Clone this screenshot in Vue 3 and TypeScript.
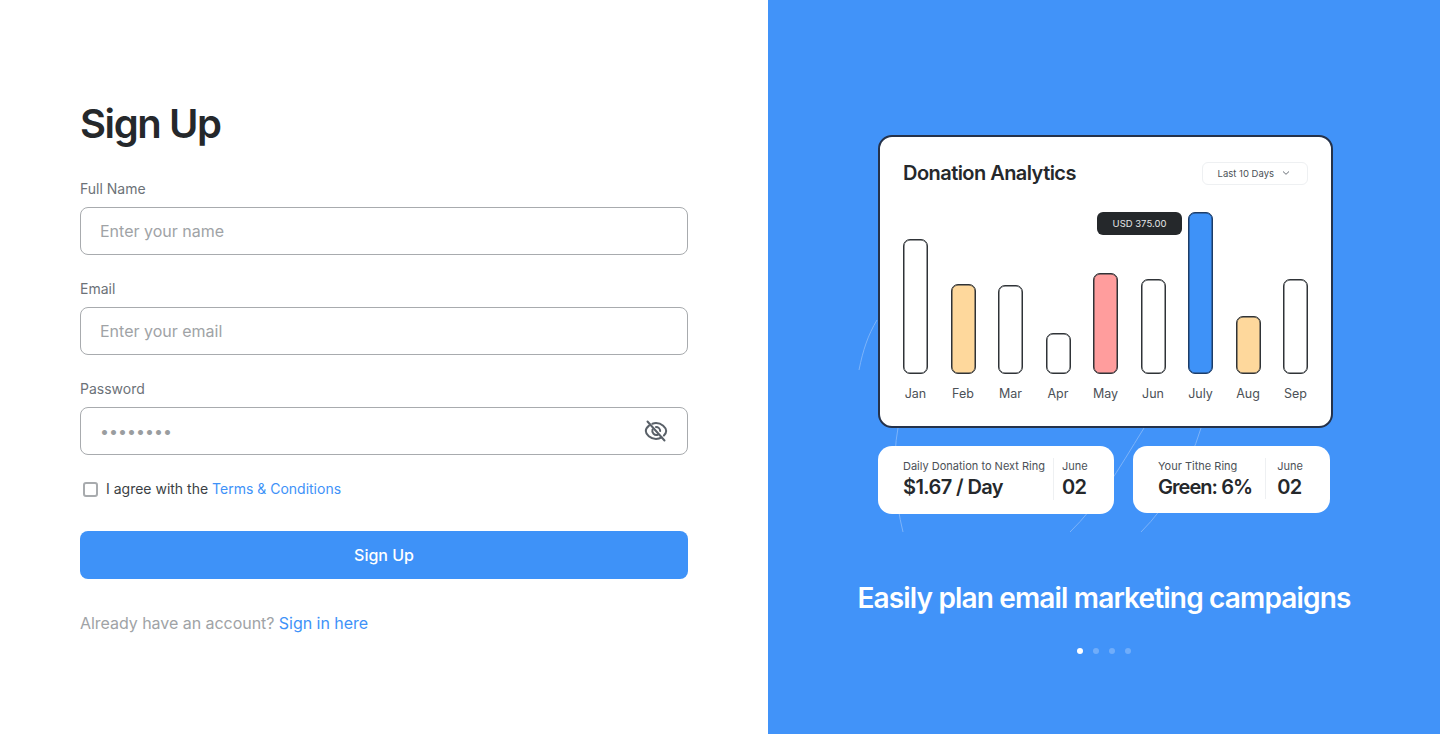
<script setup lang="ts">
interface Bar {
  month: string
  height: number
  tone?: string
}

const bars: Bar[] = [
  { month: 'Jan', height: 135 },
  { month: 'Feb', height: 90, tone: 'peach' },
  { month: 'Mar', height: 89 },
  { month: 'Apr', height: 41 },
  { month: 'May', height: 101, tone: 'pink' },
  { month: 'Jun', height: 95 },
  { month: 'July', height: 162, tone: 'blue' },
  { month: 'Aug', height: 58, tone: 'peach' },
  { month: 'Sep', height: 95 }
]

const stats = [
  { label: 'Daily Donation to Next Ring', value: '$1.67 / Day', kind: 'first' },
  { label: 'Your Tithe Ring', value: 'Green: 6%', kind: 'second' }
]
</script>

<template>
  <div class="page">
    <section class="form-side">
      <h1 class="title">Sign Up</h1>
      <form class="form" @submit.prevent>
        <div class="field">
          <label class="label">Full Name</label>
          <div class="input-box"><input class="input" type="text" placeholder="Enter your name" /></div>
        </div>
        <div class="field">
          <label class="label">Email</label>
          <div class="input-box"><input class="input" type="text" placeholder="Enter your email" /></div>
        </div>
        <div class="field">
          <label class="label">Password</label>
          <div class="input-box">
            <input class="input password" type="password" value="password" />
            <svg class="eye" viewBox="0 0 24 24" fill="none" stroke="#596068" stroke-width="2" stroke-linecap="round" stroke-linejoin="round">
              <path d="M5 6.6C3 8.2 1.8 10.2 1.8 12c0 3.4 4.6 8 10.2 8 2.100 0 4-.6 5.600-1.600" />
              <path d="M8.400 4.700C9.500 4.300 10.700 4 12 4c5.600 0 10.200 4.600 10.200 8 0 1.500-.9 3.100-2.300 4.500" />
              <path d="M8.500 10.500A4.200 4.200 0 0 0 13.800 15.800" />
              <path d="M12 7.900a4.200 4.200 0 0 1 4.200 4.100" />
              <path d="M3.500 2.500 20.500 21.500" />
            </svg>
          </div>
        </div>
        <label class="agree">
          <span class="check"></span>
          <span>I agree with the <a class="link">Terms &amp; Conditions</a></span>
        </label>
        <button class="submit" type="submit">Sign Up</button>
      </form>
      <p class="signin">Already have an account? <a class="link">Sign in here</a></p>
    </section>

    <section class="promo-side">
      <svg class="arcs" viewBox="0 0 672 734" fill="none" stroke="#9cc5fb" stroke-width="1">
        <path d="M109 320C100 335 95 350 91 370" />
        <path d="M130 428C124 460 127 500 135 532" />
        <path d="M376 428C350 470 330 505 302 532" />
        <path d="M433 428C420 470 400 505 373 532" />
      </svg>

      <div class="mock">
        <div class="card">
          <div class="card-head">
            <h2 class="card-title">Donation Analytics</h2>
            <div class="range">
              Last 10 Days
              <svg class="chev" viewBox="0 0 8 6" fill="none" stroke="#596068" stroke-width="0.9"><path d="M1 1.500 4 4.300 7 1.500" /></svg>
            </div>
          </div>
          <div class="chart">
            <div class="tooltip">USD 375.00</div>
            <div v-for="bar in bars" :key="bar.month" class="col">
              <div class="track">
                <div class="bar" :class="bar.tone" :style="{ height: bar.height + 'px' }"></div>
              </div>
              <span class="month">{{ bar.month }}</span>
            </div>
          </div>
        </div>

        <div class="stats">
          <div v-for="stat in stats" :key="stat.label" class="stat" :class="stat.kind">
            <div class="stat-main">
              <div class="stat-label">{{ stat.label }}</div>
              <div class="stat-value">{{ stat.value }}</div>
            </div>
            <div class="stat-date">
              <div class="stat-label">June</div>
              <div class="stat-value">02</div>
            </div>
          </div>
        </div>
      </div>

      <h2 class="tagline">Easily plan email marketing campaigns</h2>
      <div class="dots">
        <span class="dot on"></span>
        <span class="dot"></span>
        <span class="dot"></span>
        <span class="dot"></span>
      </div>
    </section>
  </div>
</template>

<style>
html,
body {
  margin: 0;
  background: #fff;
}
</style>

<style scoped>
.page {
  display: flex;
  height: 734px;
  overflow: hidden;
  font-family: Inter, "Noto Sans", sans-serif;
  color: #25282b;
}

.form-side {
  width: 768px;
  box-sizing: border-box;
  padding: 99px 80px 0;
}

.title {
  margin: 0 0 31px;
  font-size: 40px;
  line-height: 50px;
  font-weight: 600;
  letter-spacing: -1.4px;
  color: #25282b;
}

.form {
  display: flex;
  flex-direction: column;
}

.field {
  display: flex;
  flex-direction: column;
  gap: 9px;
  margin-bottom: 25px;
}

.field:last-of-type {
  margin-bottom: 24px;
}

.label {
  font-size: 14px;
  line-height: 18px;
  color: #6c7278;
}

.input-box {
  display: flex;
  align-items: center;
  height: 48px;
  box-sizing: border-box;
  padding: 0 19px;
  border: 1px solid #a8abae;
  border-radius: 8px;
  background: #fff;
}

.input {
  flex: 1;
  min-width: 0;
  padding: 0;
  border: 0;
  outline: 0;
  background: transparent;
  font-family: inherit;
  font-size: 16px;
  color: #25282b;
}

.input::placeholder {
  color: #a0a3a6;
  opacity: 1;
}

.password {
  color: #9a9da0;
  font-size: 16px;
  letter-spacing: 0;
}

.eye {
  width: 24px;
  height: 24px;
  flex-shrink: 0;
}

.agree {
  display: flex;
  align-items: center;
  gap: 8px;
  padding-left: 3px;
  font-size: 14px;
  line-height: 20px;
  color: #3b3f44;
}

.check {
  width: 11px;
  height: 11px;
  border: 2px solid #a8abae;
  border-radius: 3px;
  flex-shrink: 0;
}

.link {
  color: #3e92f8;
}

.submit {
  height: 48px;
  margin-top: 32px;
  border: 0;
  border-radius: 8px;
  background: #3e92f8;
  color: #fff;
  font-family: inherit;
  font-size: 16px;
  font-weight: 500;
}

.signin {
  margin: 34px 0 0;
  font-size: 16px;
  line-height: 20px;
  letter-spacing: -0.04px;
  color: #a0a3a6;
}

.promo-side {
  position: relative;
  flex: 1;
  display: flex;
  flex-direction: column;
  align-items: center;
  padding-top: 135px;
  background: #4193f9;
}

.arcs {
  position: absolute;
  left: 0;
  top: 0;
  width: 672px;
  height: 734px;
  opacity: 0.65;
}

.mock {
  position: relative;
  width: 455px;
  margin-left: 3px;
}

.card {
  height: 293px;
  box-sizing: border-box;
  padding: 24px 23px 0;
  border: 2px solid #25324a;
  border-radius: 14px;
  background: #fff;
}

.card-head {
  display: flex;
  align-items: center;
  justify-content: space-between;
  height: 24px;
}

.card-title {
  margin: 0;
  font-size: 20px;
  line-height: 24px;
  font-weight: 600;
  letter-spacing: -0.55px;
  color: #25282b;
}

.range {
  display: flex;
  align-items: center;
  gap: 8px;
  height: 23px;
  box-sizing: border-box;
  padding: 0 17px 0 15px;
  border: 1px solid #eef0f2;
  border-radius: 6px;
  font-size: 9.500px;
  color: #4c5157;
}

.chev {
  width: 8px;
  height: 6px;
}

.chart {
  position: relative;
  display: flex;
  justify-content: space-between;
  margin-top: 27px;
}

.col {
  display: flex;
  flex-direction: column;
  align-items: center;
  width: 25px;
}

.track {
  display: flex;
  align-items: flex-end;
  height: 162px;
}

.bar {
  width: 25px;
  box-sizing: border-box;
  border: 1px solid #2f3337;
  border-radius: 7px;
  background: #fff;
  box-shadow: inset 0 0 0 0.5px #2f3337;
}

.bar.peach {
  background: #fed89c;
}

.bar.pink {
  background: #ff9d9d;
}

.bar.blue {
  background: #3e92f8;
  border-color: #1d3c66;
  box-shadow: inset 0 0 0 0.5px #1d3c66;
}

.month {
  margin-top: 12px;
  font-size: 12.500px;
  line-height: 15px;
  color: #4c5157;
  white-space: nowrap;
}

.tooltip {
  position: absolute;
  left: 194px;
  top: 0;
  width: 85px;
  height: 23px;
  border-radius: 6px;
  background: #25282b;
  color: #e4e6e8;
  font-size: 9.500px;
  line-height: 23px;
  text-align: center;
}

.stats {
  display: flex;
  align-items: flex-start;
  gap: 19px;
  margin-top: 18px;
}

.stat {
  display: flex;
  align-items: stretch;
  box-sizing: border-box;
  height: 68px;
  padding: 12px 0 14px 25px;
  border-radius: 14px;
  background: #fff;
}

.stat.first {
  width: 236px;
}

.stat.second {
  width: 197px;
  height: 67px;
}

.stat-main {
  padding-right: 8px;
  border-right: 1px solid #eef0f2;
}

.stat.second .stat-main {
  padding-right: 13px;
}

.stat.second .stat-main .stat-value {
  letter-spacing: -0.95px;
}

.stat-date {
  padding-left: 8px;
}

.stat.second .stat-date {
  padding-left: 11px;
}

.stat-label {
  font-size: 11px;
  line-height: 17px;
  color: #4c5157;
  white-space: nowrap;
}

.stat-value {
  font-size: 20px;
  line-height: 24px;
  font-weight: 600;
  letter-spacing: -0.6px;
  color: #25282b;
  white-space: nowrap;
}

.tagline {
  position: relative;
  margin: 66px 0 0;
  font-size: 28px;
  line-height: 36px;
  font-weight: 600;
  letter-spacing: -0.84px;
  color: #fff;
}

.dots {
  position: relative;
  display: flex;
  gap: 10px;
  margin-top: 32px;
}

.dot {
  width: 6px;
  height: 6px;
  border-radius: 50%;
  background: #70adfa;
}

.dot.on {
  background: #fff;
}
</style>
